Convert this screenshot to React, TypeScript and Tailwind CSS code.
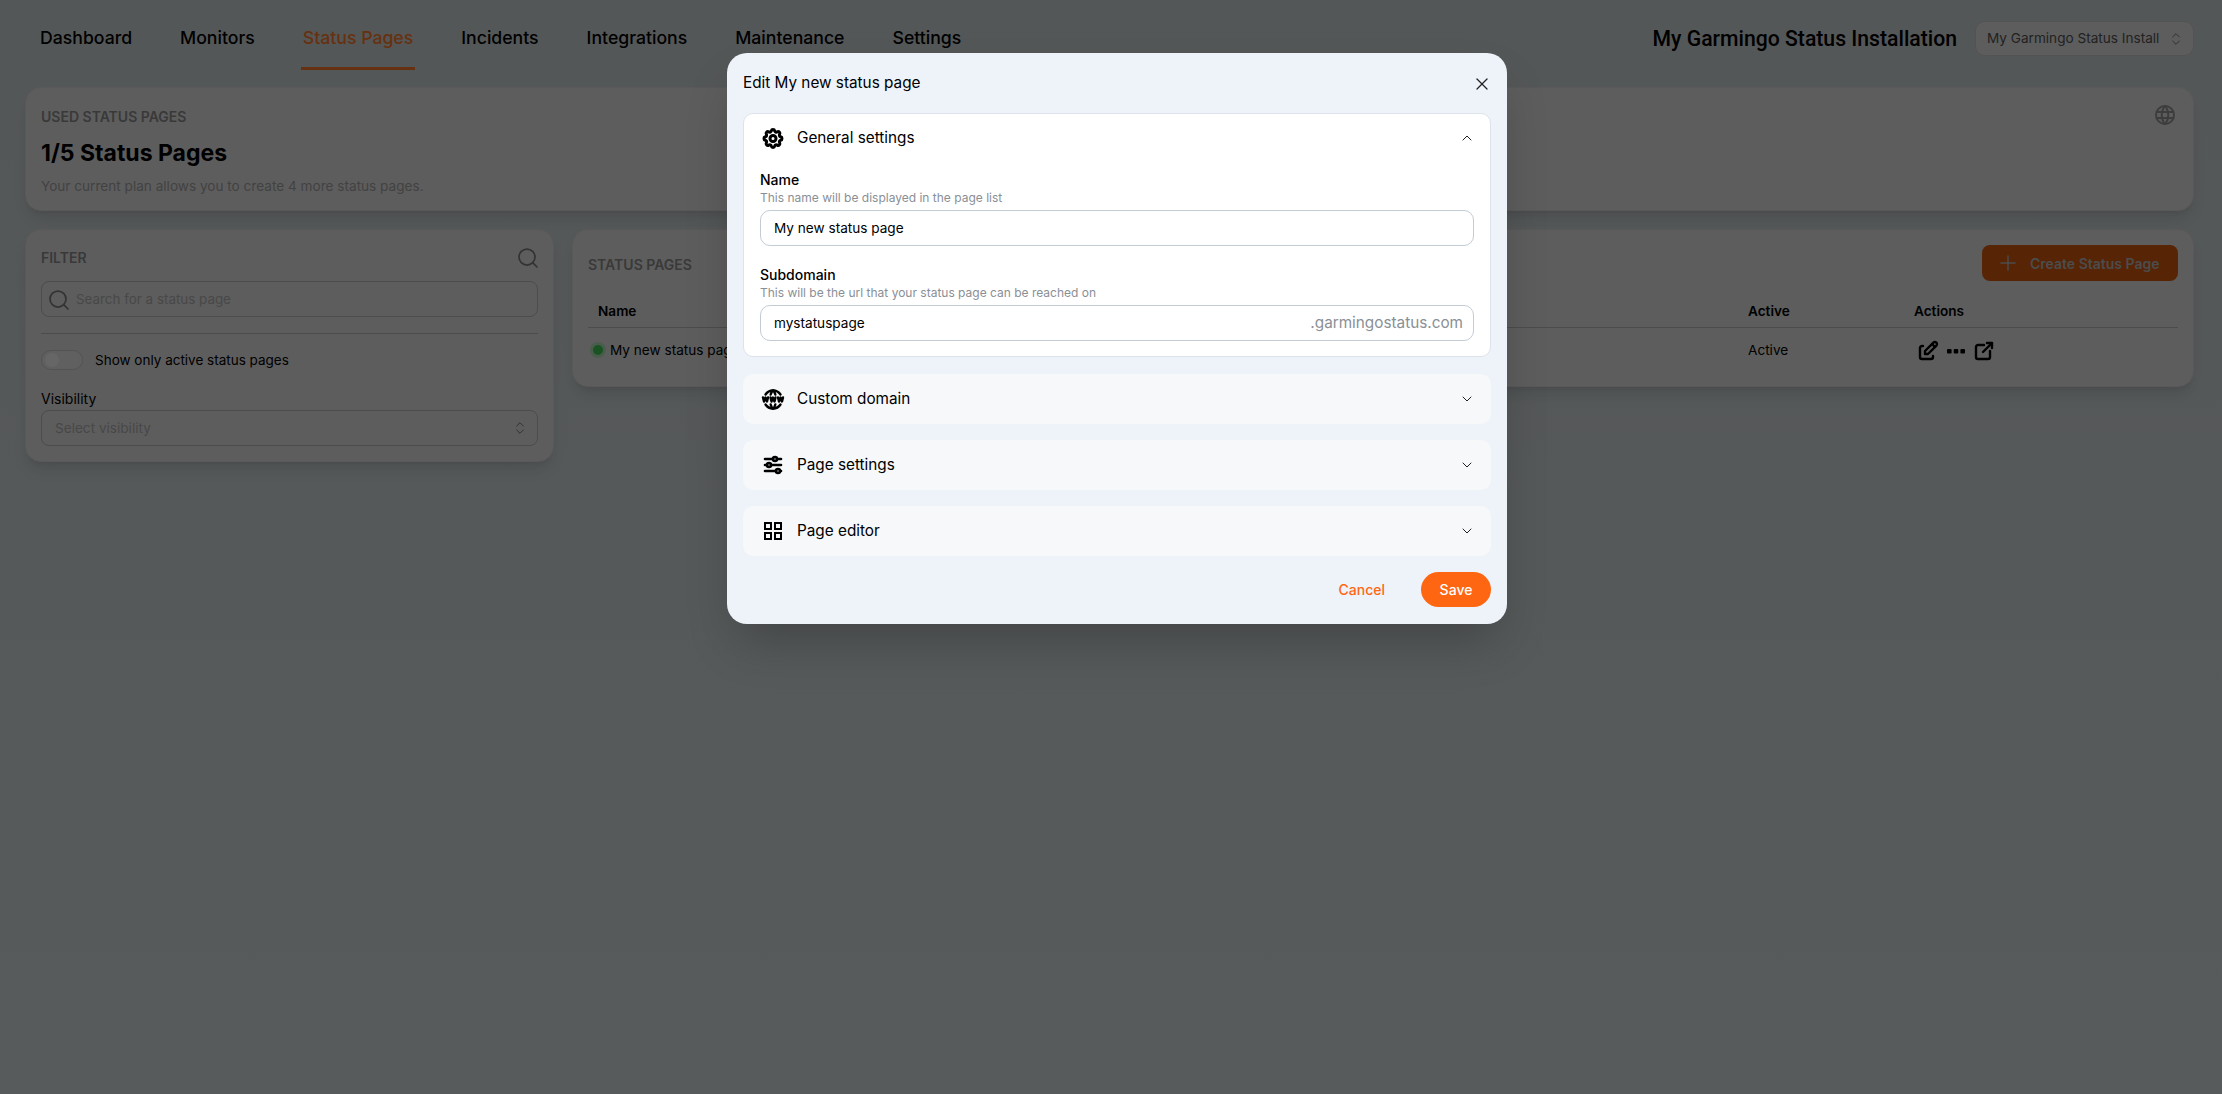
import { ChevronDown, ChevronUp, ChevronsUpDown, Plus, Search, X } from 'lucide-react';
import { TbAdjustmentsHorizontal, TbEdit, TbExternalLink, TbSettings, TbWorld, TbWorldWww } from 'react-icons/tb';
import type { ReactNode } from 'react';

const navItems = ['Dashboard', 'Monitors', 'Status Pages', 'Incidents', 'Integrations', 'Maintenance', 'Settings'];

function GridIcon() {
    return (
        <svg width="24" height="24" viewBox="0 0 24 24" fill="none" stroke="currentColor" strokeWidth="2">
            <rect x="4" y="4" width="6" height="6" />
            <rect x="14" y="4" width="6" height="6" />
            <rect x="4" y="14" width="6" height="6" />
            <rect x="14" y="14" width="6" height="6" />
        </svg>
    );
}

function DotsIcon() {
    return (
        <svg width="24" height="24" viewBox="0 0 24 24" fill="currentColor">
            <rect x="3" y="10" width="4.6" height="4.6" rx="1" />
            <rect x="9.7" y="10" width="4.6" height="4.6" rx="1" />
            <rect x="16.4" y="10" width="4.6" height="4.6" rx="1" />
        </svg>
    );
}

function Field({ label, hint, value, suffix }: { label: string; hint: string; value: string; suffix?: string }) {
    return (
        <div>
            <div className="text-[14px] leading-[16px] font-medium text-black">{label}</div>
            <div className="text-[12px] leading-[16px] mt-[2px] text-[#8a8f96]">{hint}</div>
            <div className="mt-[4px] h-[36px] flex items-center justify-between pl-[13px] pr-[10px] pt-[1px] bg-white border border-[#c3ccd6] rounded-[10px]">
                <span className="text-[13.6px] text-black">{value}</span>
                {suffix && <span className="text-[15.3px] text-[#8a8f96]">{suffix}</span>}
            </div>
        </div>
    );
}

function CollapsedRow({ icon, title }: { icon: ReactNode; title: string }) {
    return (
        <div className="h-[50px] flex items-center justify-between pl-[18px] pr-[16px] bg-[#f6f8fa] rounded-[10px]">
            <div className="flex items-center gap-[12px]">
                <span className="w-[24px] flex justify-center text-black">{icon}</span>
                <span className="text-[15.3px] text-black">{title}</span>
            </div>
            <ChevronDown className="w-[16px] h-[16px] text-[#222]" strokeWidth={1.5} />
        </div>
    );
}

export default function App() {
    return (
        <div className="relative h-[1094px] overflow-hidden bg-linear-to-b from-[#d2d9da] to-[#dbe4e5] font-['Inter',sans-serif]">
            {/* Top navigation */}
            <header className="h-[87px] flex justify-between pl-[40px] pr-[28px]">
                <nav className="flex gap-[48px]">
                    {navItems.map((item) => (
                        <div
                            key={item}
                            className={
                                item === 'Status Pages'
                                    ? 'h-[70px] pt-[26px] -mx-[2px] px-[2px] text-[17.67px] leading-[24px] font-medium text-[#ff7a28] border-b-[3px] border-[#ff7a28]'
                                    : 'h-[70px] pt-[26px] text-[17.67px] leading-[24px] font-medium text-black'
                            }
                        >
                            {item}
                        </div>
                    ))}
                </nav>
                <div className="flex items-start gap-[18px] pt-[21px]">
                    <span className="text-[21.2px] leading-[35px] font-medium text-black font-['Roboto',sans-serif]">My Garmingo Status Installation</span>
                    <div className="w-[219px] h-[35px] flex items-center justify-between pl-[11px] pr-[9px] bg-[#e8e8e8] border border-[#cfcfcf] rounded-[10px]">
                        <span className="text-[13.6px] text-[#555]">My Garmingo Status Install</span>
                        <ChevronsUpDown className="w-[16px] h-[16px] text-[#777]" strokeWidth={1.5} />
                    </div>
                </div>
            </header>

            <main className="pl-[25px] pr-[28px]">
                {/* Usage summary */}
                <section className="relative h-[124px] bg-[#e8e8e8] rounded-[16px] border border-[#dedede] shadow-lg pl-[15px] pt-[20px]">
                    <div className="text-[14px] leading-[18px] font-semibold text-[#909090] uppercase">Used Status Pages</div>
                    <div className="mt-[12px] text-[23px] leading-[30px] font-bold text-black">1/5 Status Pages</div>
                    <div className="mt-[9px] text-[13.6px] leading-[18px] text-[#a6a6a6]">Your current plan allows you to create 4 more status pages.</div>
                    <TbWorld className="absolute right-[16px] top-[15px] w-[24px] h-[24px] text-[#999]" />
                </section>

                <div className="mt-[18px] flex items-start gap-[18px]">
                    {/* Filter panel */}
                    <aside className="w-[529px] h-[233px] shrink-0 bg-[#e8e8e8] rounded-[16px] border border-[#dedede] shadow-lg px-[15px] pt-[16px]">
                        <div className="flex items-center justify-between h-[24px]">
                            <span className="text-[14px] leading-[20px] font-semibold text-[#909090] uppercase">Filter</span>
                            <Search className="w-[24px] h-[24px] -mr-[2px] text-[#808080]" strokeWidth={1.75} />
                        </div>
                        <div className="mt-[11px] h-[36px] flex items-center gap-[5px] pl-[5px] pt-[1px] border border-[#bdbdbd] rounded-[8px]">
                            <Search className="w-[24px] h-[24px] text-[#808080]" strokeWidth={1.75} />
                            <span className="text-[13.4px] text-[#b4b4b4]">Search for a status page</span>
                        </div>
                        <div className="mt-[16px] border-t border-[#bdbdbd]" />
                        <div className="mt-[16px] flex items-center gap-[12px]">
                            <div className="w-[42px] h-[20px] rounded-full bg-[#f0f0f0] border border-[#cfcfcf] flex items-center pl-[3px]">
                                <div className="w-[14px] h-[14px] rounded-full bg-white" />
                            </div>
                            <span className="text-[13.5px] text-black">Show only active status pages</span>
                        </div>
                        <div className="mt-[20px] text-[14px] leading-[18px] text-black">Visibility</div>
                        <div className="mt-[2px] h-[36px] flex items-center justify-between pl-[13px] pr-[9px] border border-[#bdbdbd] rounded-[8px]">
                            <span className="text-[13.6px] text-[#b4b4b4]">Select visibility</span>
                            <ChevronsUpDown className="w-[16px] h-[16px] text-[#777]" strokeWidth={1.5} />
                        </div>
                    </aside>

                    {/* Status page table */}
                    <section className="flex-1 h-[158px] bg-[#e8e8e8] rounded-[16px] border border-[#dedede] shadow-lg px-[15px] pt-[15px]">
                        <div className="flex items-center justify-between">
                            <span className="mt-[2px] text-[14px] font-semibold text-[#909090] uppercase">Status Pages</span>
                            <div className="w-[196px] h-[36px] flex items-center gap-[10px] pl-[14px] bg-[#d95a0f] rounded-[8px]">
                                <Plus className="w-[24px] h-[24px] text-[#bdbdbd]" strokeWidth={1.5} />
                                <span className="text-[14px] font-semibold text-[#bdbdbd]">Create Status Page</span>
                            </div>
                        </div>
                        <div className="mt-[18px] pt-[2px] grid grid-cols-[1160px_166px_1fr] h-[29px] border-b border-[#bdbdbd] text-[13.6px] font-semibold text-black">
                            <span className="pl-[10px]">Name</span>
                            <span>Active</span>
                            <span>Actions</span>
                        </div>
                        <div className="grid grid-cols-[1160px_166px_1fr] items-center h-[45px] text-[13.6px] text-black">
                            <div className="flex items-center gap-[4px] pl-[2px]">
                                <span className="w-[16px] h-[16px] rounded-full bg-[#b8e8c0] flex items-center justify-center">
                                    <span className="w-[10px] h-[10px] rounded-full bg-[#3fcf55]" />
                                </span>
                                <span>My new status page</span>
                            </div>
                            <span>Active</span>
                            <div className="flex items-center gap-[4px] pl-[2px] text-black">
                                <TbEdit className="w-[24px] h-[24px]" strokeWidth={2.4} />
                                <DotsIcon />
                                <TbExternalLink className="w-[24px] h-[24px]" strokeWidth={2.4} />
                            </div>
                        </div>
                    </section>
                </div>
            </main>

            {/* Modal backdrop and dialog */}
            <div className="absolute inset-0 bg-black/60 flex justify-center items-start pt-[53px] pl-[12px]">
                <div className="w-[780px] h-[571px] bg-[#eef3fa] rounded-[20px] shadow-2xl px-[16px]">
                    <div className="h-[60px] pt-[1px] flex items-center justify-between">
                        <span className="text-[15.3px] text-black">Edit My new status page</span>
                        <X className="w-[20px] h-[20px] -mr-[1px] text-[#222]" strokeWidth={1.5} />
                    </div>
                    <div className="h-[244px] bg-white border border-[#dde3ea] rounded-[10px] px-[16px]">
                        <div className="h-[48px] flex items-center justify-between pl-[1px] -mr-[1px]">
                            <div className="flex items-center gap-[12px]">
                                <span className="w-[24px] flex justify-center text-black">
                                    <TbSettings className="w-[25px] h-[25px]" strokeWidth={3} />
                                </span>
                                <span className="text-[15.3px] text-black">General settings</span>
                            </div>
                            <ChevronUp className="w-[16px] h-[16px] text-[#222]" strokeWidth={1.5} />
                        </div>
                        <div className="mt-[10px] flex flex-col gap-[21px]">
                            <Field label="Name" hint="This name will be displayed in the page list" value="My new status page" />
                            <Field label="Subdomain" hint="This will be the url that your status page can be reached on" value="mystatuspage" suffix=".garmingostatus.com" />
                        </div>
                    </div>
                    <div className="mt-[17px] flex flex-col gap-[16px]">
                        <CollapsedRow icon={<TbWorldWww className="w-[25px] h-[25px]" strokeWidth={2.4} />} title="Custom domain" />
                        <CollapsedRow icon={<TbAdjustmentsHorizontal className="w-[24px] h-[24px]" strokeWidth={2.6} />} title="Page settings" />
                        <CollapsedRow icon={<GridIcon />} title="Page editor" />
                    </div>
                    <div className="mt-[16px] flex items-center justify-end gap-[36px]">
                        <span className="text-[14px] font-medium text-[#ff6611]">Cancel</span>
                        <div className="w-[70px] h-[35px] flex items-center justify-center rounded-full bg-[#ff6611] text-[14px] font-medium text-white">Save</div>
                    </div>
                </div>
            </div>
        </div>
    );
}
